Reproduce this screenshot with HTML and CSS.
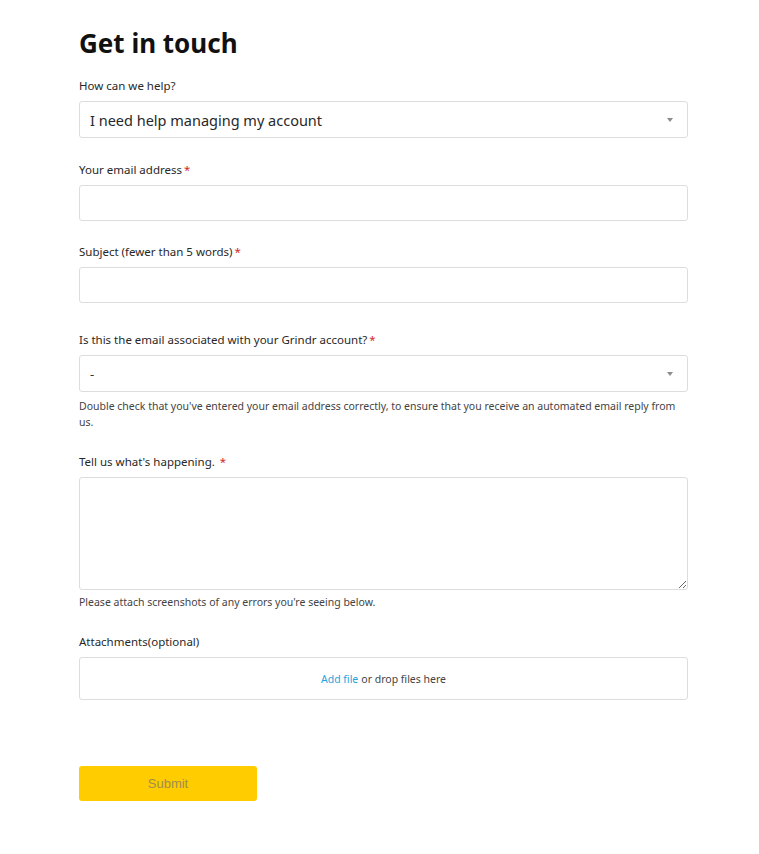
FILE: index.html
```html
<!DOCTYPE html>
<html lang="en">

<head>
    <meta charset="UTF-8">
    <meta name="viewport" content="width=device-width, initial-scale=1.0">
    <title>Get in touch</title>
    <link rel="stylesheet" href="styles.css">
</head>

<body>
    <div id="main">
        <h1>Get in touch</h1>
        <form>
            <div class="field">
                <label>How can we help?</label>
                <div class="select big">
                    <span>I need help managing my account</span>
                    <span class="arrow"></span>
                </div>
            </div>

            <div class="field short">
                <label>Your email address<span class="req">*</span></label>
                <input type="text">
            </div>

            <div class="field tall">
                <label>Subject (fewer than 5 words)<span class="req">*</span></label>
                <input type="text">
            </div>

            <div class="field">
                <label>Is this the email associated with your Grindr account?<span class="req">*</span></label>
                <div class="select">
                    <span>-</span>
                    <span class="arrow"></span>
                </div>
                <p class="hint">Double check that you've entered your email address correctly, to ensure that you receive an automated email reply from us.</p>
            </div>

            <div class="field">
                <label>Tell us what's happening. <span class="req">*</span></label>
                <textarea></textarea>
                <p class="hint small-gap">Please attach screenshots of any errors you're seeing below.</p>
            </div>

            <div class="field">
                <label>Attachments(optional)</label>
                <div class="drop"><a href="#">Add file</a> or drop files here</div>
            </div>

            <button type="submit" class="submit">Submit</button>
        </form>
    </div>
</body>

</html>
```

FILE: styles.css
```css
body {
    margin: 0;
    background-color: white;
    font-family: 'Noto Sans', 'Open Sans', sans-serif;
    color: rgb(51, 51, 51);
}

#main {
    width: 609px;
    margin-left: 79px;
    padding-top: 25px;
}

h1 {
    margin: 0 0 17px;
    font-size: 26px;
    line-height: 36px;
    font-weight: 700;
    color: rgb(17, 17, 17);
}

.field {
    margin-bottom: 24px;
}

.field.short {
    margin-bottom: 23px;
}

.field.tall {
    margin-bottom: 29px;
}

label {
    display: block;
    font-size: 11.5px;
    line-height: 16px;
    margin-bottom: 7px;
    color: rgb(40, 40, 40);
}

.req {
    color: rgb(214, 40, 40);
    margin-left: 2px;
}

.select,
input,
textarea,
.drop {
    box-sizing: border-box;
    width: 100%;
    border: 1px solid rgb(221, 221, 221);
    border-radius: 3px;
    background: white;
}

.select {
    height: 37px;
    display: flex;
    align-items: center;
    justify-content: space-between;
    padding: 0 14px 0 10px;
    font-size: 13px;
}

.select.big {
    font-size: 14.5px;
    color: rgb(40, 40, 40);
}

.arrow {
    width: 0;
    height: 0;
    border-left: 3px solid transparent;
    border-right: 3px solid transparent;
    border-top: 4px solid rgb(140, 140, 140);
}

input {
    display: block;
    height: 36px;
}

textarea {
    display: block;
    height: 113px;
    resize: vertical;
    font-family: inherit;
}

.hint {
    margin: 6px 0 0;
    font-size: 10.5px;
    line-height: 16px;
    color: rgb(68, 68, 68);
}

.hint.small-gap {
    margin-top: 4px;
}

.drop {
    height: 43px;
    display: flex;
    align-items: center;
    justify-content: center;
    font-size: 10.5px;
    color: rgb(68, 68, 68);
}

.drop a {
    color: rgb(31, 164, 220);
    text-decoration: none;
    margin-right: 3px;
}

.submit {
    margin-top: 42px;
    width: 178px;
    height: 35px;
    border: none;
    border-radius: 3px;
    background-color: rgb(255, 204, 0);
    color: rgb(160, 140, 80);
    font-family: 'Liberation Sans', Arial, sans-serif;
    font-size: 13px;
}
```
